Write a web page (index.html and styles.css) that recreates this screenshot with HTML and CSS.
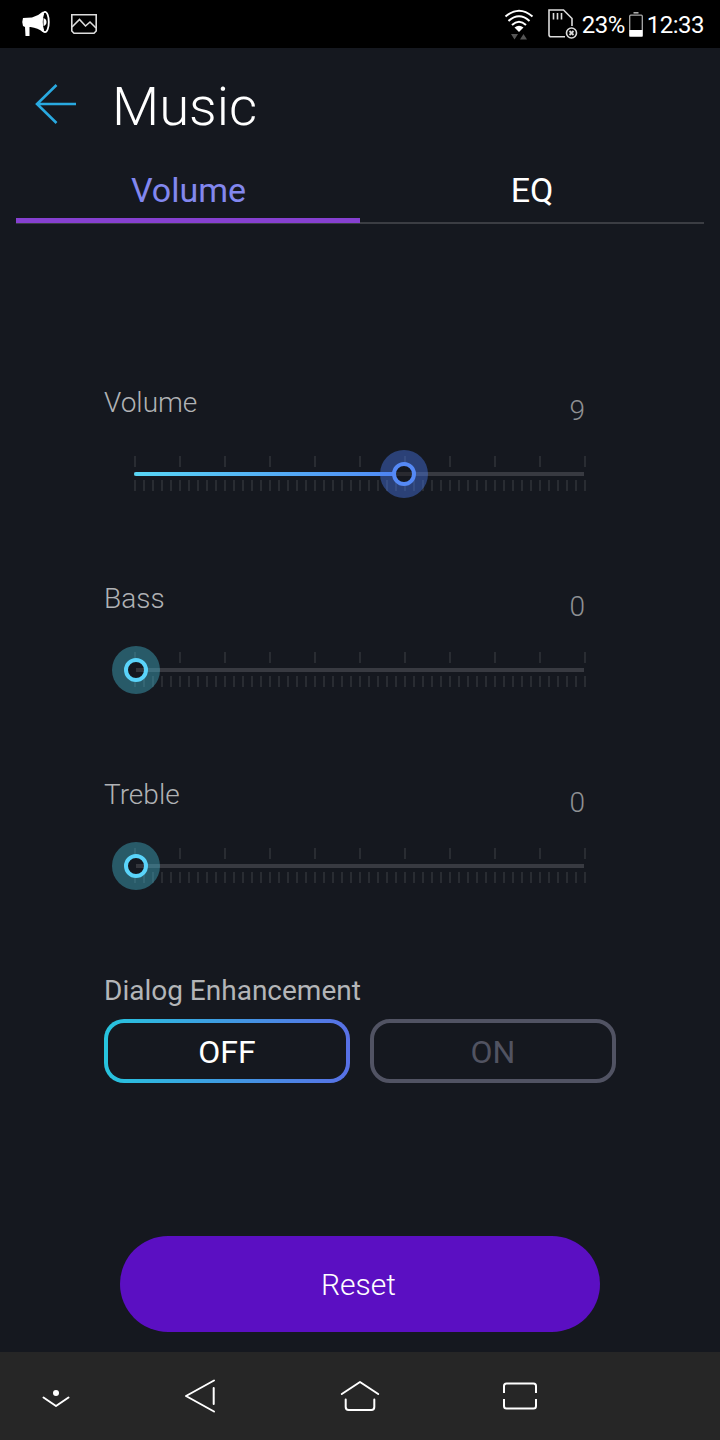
FILE: index.html
```html
<!DOCTYPE html>
<html lang="en">
<head>
  <meta charset="UTF-8" />
  <meta name="viewport" content="width=device-width, initial-scale=1.0" />
  <title>Music</title>
  <link rel="stylesheet" href="styles.css">
</head>
<body>

  <div class="status-bar">
    <div class="status-left">
      <svg width="30" height="28" viewBox="0 0 30 28" fill="#fff">
        <path d="M2 8 L11 7.500 Q17 6 22 1.500 Q19.500 12 22 22 Q17 18 9.500 17 L8.500 17 L8.500 26 H4.500 L4 17 L2 16 Q0.500 12 2 8Z" />
        <ellipse cx="24" cy="12" rx="3.800" ry="10.200" fill="none" stroke="#fff" stroke-width="1.800" />
        <path d="M21 2 Q18 12 21 22 L23 20 Q20.500 12 23 4Z M22.500 8 Q25.500 9 25.500 12 Q25.500 15 22.500 16Z" />
      </svg>
      <svg width="26" height="20" viewBox="0 0 26 20" fill="none" stroke="#ddd" stroke-width="1.600">
        <path d="M0.800 0.800 H25.200 V17 L23 19.200 H3 L0.800 17Z" />
        <path d="M1 13 L8.500 5.500 L14.500 12 L19 8 L25 14" />
      </svg>
    </div>
    <div class="status-right">
      <svg class="wifi" width="30" height="32" viewBox="0 0 30 32" fill="none" stroke="#fff" stroke-width="2">
        <path d="M1.500 7.500 Q15 -4 28.500 7.500" />
        <path d="M4.500 12 Q15 2.500 25.500 12" />
        <path d="M8 16 Q15 9.500 22 16" />
        <path d="M10.500 18.500 Q15 15 19.500 18.500 L15 23Z" fill="#fff" stroke="none" />
        <path d="M7 25 H14 L10.500 30.500Z M16 30.500 H23 L19.500 25Z" fill="#555" stroke="none" />
      </svg>
      <svg class="sd" width="30" height="30" viewBox="0 0 30 30" fill="none" stroke="#ddd" stroke-width="1.600">
        <path d="M17 27.700 H3 Q1 27.700 1 25.700 V1 H15.500 L24 9.500 V17" />
        <path d="M5.500 4 V10.500 M9.500 4 V10.500 M13.500 4 V10.500" />
        <circle cx="23.500" cy="24" r="5" />
        <path d="M21.500 22 L25.500 26 M25.500 22 L21.500 26" stroke-width="1.800" />
      </svg>
      <span class="percent">23%</span>
      <svg class="battery" width="14" height="25" viewBox="0 0 14 25">
        <path d="M4.500 0.800 H9.500" stroke="#aaa" stroke-width="1.600" />
        <rect x="0.700" y="3.200" width="12.600" height="21" rx="1" fill="none" stroke="#aaa" stroke-width="1.300" />
        <rect x="0.500" y="18" width="13" height="6.500" fill="#fff" />
      </svg>
      <span class="time">12:33</span>
    </div>
  </div>

  <div class="header">
    <svg width="42" height="40" viewBox="0 0 42 40" fill="none" stroke="#29a9e0" stroke-width="2.600">
      <path d="M21.500 1 L2 20 L21.500 39 M2 20 H41" />
    </svg>
    <h1>Music</h1>
  </div>

  <div class="tabs">
    <div class="tab active">Volume</div>
    <div class="tab">EQ</div>
  </div>

  <div class="controls">
    <div class="control volume">
      <div class="label">Volume</div>
      <div class="value">9</div>
      <div class="slider">
        <div class="ticks-long"></div>
        <div class="track"><div class="fill" style="width: 60%"></div></div>
        <div class="ticks-short"></div>
        <div class="knob" style="left: 270px"></div>
      </div>
    </div>
    <div class="control">
      <div class="label">Bass</div>
      <div class="value">0</div>
      <div class="slider">
        <div class="ticks-long"></div>
        <div class="track"></div>
        <div class="ticks-short"></div>
        <div class="knob" style="left: 2px"></div>
      </div>
    </div>
    <div class="control">
      <div class="label">Treble</div>
      <div class="value">0</div>
      <div class="slider">
        <div class="ticks-long"></div>
        <div class="track"></div>
        <div class="ticks-short"></div>
        <div class="knob" style="left: 2px"></div>
      </div>
    </div>

    <div class="dialog-label">Dialog Enhancement</div>
    <div class="toggle">
      <button class="option selected">OFF</button>
      <button class="option">ON</button>
    </div>
  </div>

  <button class="reset">Reset</button>

  <div class="nav-bar">
    <svg class="hide" width="28" height="20" viewBox="0 0 28 20" fill="none" stroke="#fff" stroke-width="2" stroke-linecap="round" stroke-linejoin="round">
      <circle cx="14" cy="4" r="3" fill="#fff" stroke="none" />
      <path d="M1.500 8.500 L14 17 L26.500 8.500" />
    </svg>
    <svg class="back" width="32" height="34" viewBox="0 0 32 34" fill="none" stroke="#fff" stroke-width="2" stroke-linecap="round" stroke-linejoin="round">
      <path d="M30 1.500 L2 17 L30 32.500 M29.700 9 V25" />
    </svg>
    <svg class="home" width="40" height="32" viewBox="0 0 40 32" fill="none" stroke="#fff" stroke-width="2" stroke-linecap="round" stroke-linejoin="round">
      <path d="M1.800 14 L20 2 L38.200 14" />
      <path d="M5.700 19.500 V27 Q5.700 30 8.700 30 H31.300 Q34.300 30 34.300 27 V19.500" />
    </svg>
    <svg class="recent" width="36" height="28" viewBox="0 0 36 28" fill="none" stroke="#fff" stroke-width="2">
      <path d="M2 11 V4 Q2 1.500 4.500 1.500 H31.500 Q34 1.500 34 4 V11" />
      <path d="M2 17 V24 Q2 26.500 4.500 26.500 H31.500 Q34 26.500 34 24 V17" />
    </svg>
  </div>

</body>
</html>
```
FILE: styles.css
```css
* { box-sizing: border-box; }
body {
  font-family: Roboto, sans-serif;
  background-color: #15181f;
  margin: 0;
  height: 1440px;
  color: #fff;
  display: flex;
  flex-direction: column;
}
svg { display: block; flex: none; }
button { font-family: inherit; background: none; border: none; padding: 0; }

.status-bar {
  height: 48px;
  background-color: #000;
  display: flex;
  justify-content: space-between;
  padding: 0 16px 0 21px;
  font-size: 24px;
  letter-spacing: -0.5px;
}
.status-left { display: flex; align-items: center; gap: 20px; }
.status-right { display: flex; align-items: flex-start; line-height: 28px; }
.wifi { margin: 9px 14px 0 0; }
.sd { margin: 9px 4px 0 0; }
.percent, .time { margin-top: 11px; }
.battery { margin: 12px 4px 0 4px; }

.header {
  height: 112px;
  display: flex;
  align-items: center;
  gap: 35px;
  padding-left: 35px;
}
h1 { margin: 4px 0 0; font-size: 54.5px; font-weight: 300; line-height: 64px; }

.tabs {
  display: flex;
  height: 64px;
  margin: 0 16px;
  border-bottom: 2px solid #3b3d43;
}
.tab {
  width: 50%;
  height: 63px;
  text-align: center;
  font-size: 34px;
  line-height: 60px;
}
.tab.active {
  padding-left: 1px;
  color: #8287ee;
  border-bottom: 5px solid #8640d0;
}

.controls { padding: 161px 104px 0; }
.control {
  height: 196px;
  color: #b0b2b5;
  font-size: 28px;
  font-weight: 300;
}
.label { height: 12px; line-height: 36px; }
.value {
  height: 59px;
  line-height: 28px;
  padding-right: 31px;
  text-align: right;
  color: #8e9093;
}
.slider {
  position: relative;
  width: 452px;
  height: 36px;
  margin-left: 30px;
}
.ticks-long, .ticks-short { height: 11px; }
.ticks-long { background: repeating-linear-gradient(90deg, #292c32 0 2px, transparent 2px 45px); }
.ticks-short { background: repeating-linear-gradient(90deg, #292c32 0 2px, transparent 2px 9px); }
.track {
  width: 450px;
  height: 4px;
  margin: 5px 0 4px;
  background-color: #383a41;
}
.fill {
  height: 4px;
  border-radius: 2px 0 0 2px;
  background: linear-gradient(90deg, #58d6f5, #5087f5);
}
/* ring with a see-through centre, halo around it */
.knob {
  position: absolute;
  top: 6px;
  width: 24px;
  height: 24px;
  margin-left: -12px;
  border: 4px solid #5ad4fa;
  border-radius: 50%;
  background: linear-gradient(90deg, #15181f 50%, #34363c 50%) center / 16px 4px no-repeat #15181f;
  box-shadow: 0 0 0 12px rgba(70, 190, 215, 0.4);
}
.volume .knob {
  border-color: #5589f5;
  background: linear-gradient(#292a30, #292a30) center / 16px 4px no-repeat #15181f;
  box-shadow: 0 0 0 12px rgba(75, 125, 240, 0.42);
}

.dialog-label { height: 46px; line-height: 36px; font-size: 28px; color: #b3b5b8; }
.toggle { display: flex; gap: 20px; }
.option {
  width: 246px;
  height: 64px;
  padding-top: 2px;
  border: 4px solid #515363;
  border-radius: 20px;
  font-size: 32px;
  color: #515361;
}
.option.selected {
  color: #fff;
  border-color: transparent;
  background: linear-gradient(#15181f, #15181f) padding-box, linear-gradient(90deg, #27c4de, #5870e6) border-box;
}

.reset {
  width: 480px;
  height: 96px;
  margin: 153px 0 0 120px;
  padding-right: 3px;
  border-radius: 48px;
  background-color: #5b0fc2;
  color: #fff;
  font-size: 30px;
  font-weight: 300;
}

.nav-bar {
  height: 88px;
  margin-top: auto;
  padding-left: 42px;
  background-color: #262626;
  display: flex;
  align-items: center;
}
.hide { margin-top: 6px; }
.back { margin-left: 114px; }
.home { margin-left: 124px; }
.recent { margin-left: 122px; }
```
